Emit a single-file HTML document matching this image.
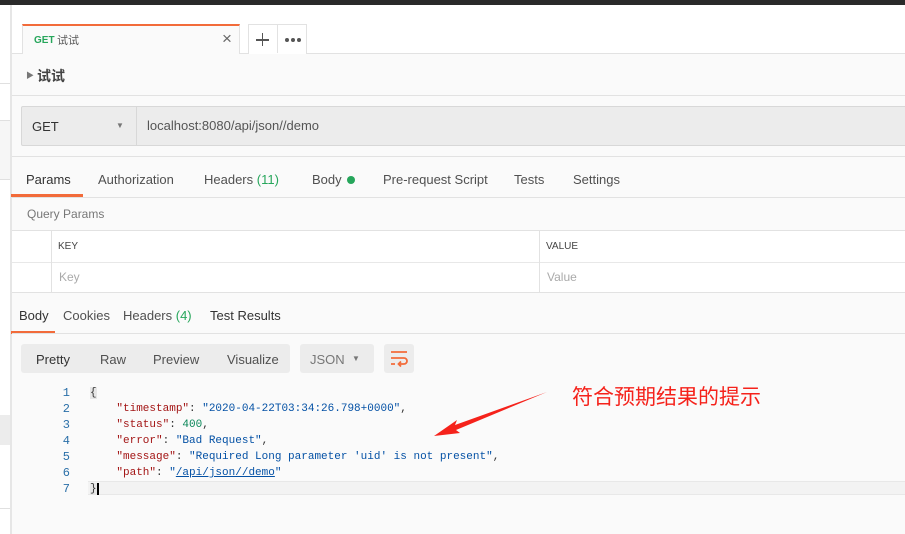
<!DOCTYPE html>
<html><head><meta charset="utf-8"><style>
*{margin:0;padding:0;box-sizing:border-box}
body{width:905px;height:534px;overflow:hidden;background:#fafafa;font-family:"Liberation Sans","Noto Sans CJK SC",sans-serif;font-size:13px;color:#505050;position:relative}
.a{position:absolute}
.t{position:absolute;white-space:nowrap}
.mono{font-family:"Liberation Mono","DejaVu Sans Mono",monospace;font-size:11px}
</style></head><body>
<div class="a" style="left:0;top:0;width:905px;height:5px;background:#2a2a2a"></div>
<div class="a" style="left:0;top:5px;width:10px;height:529px;background:#fff"></div>
<div class="a" style="left:0;top:83px;width:10px;height:1px;background:#e0e0e0"></div>
<div class="a" style="left:0;top:120px;width:10px;height:60px;background:#f6f6f6;border-top:1px solid #e0e0e0;border-bottom:1px solid #e0e0e0"></div>
<div class="a" style="left:0;top:415px;width:10px;height:30px;background:#ececec"></div>
<div class="a" style="left:0;top:508px;width:10px;height:1px;background:#e0e0e0"></div>
<div class="a" style="left:10px;top:5px;width:2px;height:529px;background:#e6e6e6"></div>

<div class="a" style="left:12px;top:5px;width:893px;height:48px;background:#fff"></div>
<div class="a" style="left:12px;top:53px;width:893px;height:1px;background:#e2e2e2"></div>
<div class="a" style="left:22px;top:24px;width:218px;height:30px;background:#fafafa;border-top:2px solid #f26b3a;border-left:1px solid #e2e2e2;border-right:1px solid #e2e2e2"></div>
<div class="t" style="left:34px;top:35px;font-size:10px;font-weight:bold;color:#26a65b;line-height:12px">GET</div>
<div class="t" style="left:57px;top:34px;font-size:11px;color:#555;line-height:14px">试试</div>
<div class="t" style="left:222px;top:29px;font-size:17px;color:#666">×</div>
<div class="a" style="left:248px;top:24px;width:59px;height:30px;border:1px solid #e2e2e2;border-bottom:none;background:#fff"></div>
<div class="a" style="left:277px;top:24px;width:1px;height:29px;background:#e2e2e2"></div>
<div class="a" style="left:256px;top:39px;width:13px;height:1.6px;background:#555"></div>
<div class="a" style="left:261.7px;top:33px;width:1.6px;height:13px;background:#555"></div>
<div class="a" style="left:285px;top:38px;width:4px;height:4px;border-radius:50%;background:#555"></div>
<div class="a" style="left:291px;top:38px;width:4px;height:4px;border-radius:50%;background:#555"></div>
<div class="a" style="left:297px;top:38px;width:4px;height:4px;border-radius:50%;background:#555"></div>

<div class="t" style="left:26px;top:70px;font-size:8px;color:#777">▶</div>
<div class="t" style="left:37px;top:66px;font-size:14px;font-weight:bold;color:#444">试试</div>
<div class="a" style="left:12px;top:95px;width:893px;height:1px;background:#e2e2e2"></div>

<div class="a" style="left:21px;top:106px;width:890px;height:40px;background:#ececec;border:1px solid #d8d8d8;border-radius:2px"></div>
<div class="a" style="left:136px;top:107px;width:1px;height:38px;background:#d8d8d8"></div>
<div class="t" style="left:32px;top:119px;font-size:13px;color:#333">GET</div>
<div class="t" style="left:116px;top:121px;font-size:8px;color:#777">▼</div>
<div class="t" style="left:147px;top:118px;font-size:13px;color:#555">localhost:8080/api/json//demo</div>
<div class="a" style="left:12px;top:156px;width:893px;height:1px;background:#e2e2e2"></div>

<div class="t" style="left:26px;top:172px;color:#333">Params</div>
<div class="a" style="left:11px;top:194px;width:72px;height:3px;background:#f26b3a"></div>
<div class="t" style="left:98px;top:172px">Authorization</div>
<div class="t" style="left:204px;top:172px">Headers <span style="color:#26a65b">(11)</span></div>
<div class="t" style="left:312px;top:172px">Body <span style="display:inline-block;width:8px;height:8px;border-radius:50%;background:#26a65b;margin-left:2px"></span></div>
<div class="t" style="left:383px;top:172px">Pre-request Script</div>
<div class="t" style="left:514px;top:172px">Tests</div>
<div class="t" style="left:573px;top:172px">Settings</div>
<div class="a" style="left:12px;top:197px;width:893px;height:1px;background:#e2e2e2"></div>

<div class="t" style="left:27px;top:207px;font-size:12px;color:#777">Query Params</div>
<div class="a" style="left:12px;top:230px;width:893px;height:63px;background:#fff;border-top:1px solid #e2e2e2;border-bottom:1px solid #e2e2e2"></div>
<div class="a" style="left:12px;top:262px;width:893px;height:1px;background:#e8e8e8"></div>
<div class="a" style="left:51px;top:230px;width:1px;height:63px;background:#e2e2e2"></div>
<div class="a" style="left:539px;top:230px;width:1px;height:63px;background:#e2e2e2"></div>
<div class="t" style="left:58px;top:241px;font-size:10px;color:#444">KEY</div>
<div class="t" style="left:546px;top:241px;font-size:10px;color:#444">VALUE</div>
<div class="t" style="left:59px;top:270px;font-size:12px;color:#aaa">Key</div>
<div class="t" style="left:547px;top:270px;font-size:12px;color:#aaa">Value</div>

<div class="t" style="left:19px;top:308px;color:#333">Body</div>
<div class="t" style="left:63px;top:308px">Cookies</div>
<div class="t" style="left:123px;top:308px">Headers <span style="color:#26a65b">(4)</span></div>
<div class="t" style="left:210px;top:308px;color:#333">Test Results</div>
<div class="a" style="left:11px;top:331px;width:44px;height:3px;background:#f26b3a"></div>
<div class="a" style="left:12px;top:333px;width:893px;height:1px;background:#e2e2e2"></div>

<div class="a" style="left:21px;top:344px;width:269px;height:29px;background:#ececec;border-radius:3px"></div>
<div class="t" style="left:36px;top:352px;color:#333">Pretty</div>
<div class="t" style="left:100px;top:352px">Raw</div>
<div class="t" style="left:153px;top:352px">Preview</div>
<div class="t" style="left:227px;top:352px">Visualize</div>
<div class="a" style="left:300px;top:344px;width:74px;height:29px;background:#ececec;border-radius:3px"></div>
<div class="t" style="left:310px;top:352px;color:#777">JSON</div>
<div class="t" style="left:352px;top:354px;font-size:8px;color:#777">▼</div>
<div class="a" style="left:384px;top:344px;width:30px;height:29px;background:#ececec;border-radius:3px"></div>
<svg class="a" style="left:384px;top:344px" width="30" height="29"><g stroke="#f26b3a" stroke-width="1.8" fill="none"><path d="M7 8h16M7 14h13a3 3 0 0 1 0 6h-5M7 20h4"/><path d="M17 17.5l-2.5 2.5 2.5 2.5"/></g></svg>

<div class="a" style="left:88px;top:481px;width:817px;height:14px;background:#f3f3f3;border-top:1px solid #e8e8e8;border-bottom:1px solid #e8e8e8"></div>
<div class="a mono" style="left:40px;top:385px;width:30px;text-align:right;line-height:16px;color:#2a6fa8;font-size:12px">1<br>2<br>3<br>4<br>5<br>6<br>7</div>
<div class="a mono" style="left:90px;top:385px;line-height:16px;white-space:pre;color:#333"><span style="background:#e6e6e6">{</span>
    <span style="color:#a31515">"timestamp"</span>: <span style="color:#0451a5">"2020-04-22T03:34:26.798+0000"</span>,
    <span style="color:#a31515">"status"</span>: <span style="color:#098658">400</span>,
    <span style="color:#a31515">"error"</span>: <span style="color:#0451a5">"Bad Request"</span>,
    <span style="color:#a31515">"message"</span>: <span style="color:#0451a5">"Required Long parameter 'uid' is not present"</span>,
    <span style="color:#a31515">"path"</span>: <span style="color:#0451a5">"<u>/api/json//demo</u>"</span>
<span style="background:#e6e6e6;border-right:2px solid #000">}</span></div>

<svg class="a" style="left:420px;top:380px" width="140" height="70"><path d="M127 12 L35 45 L37 40 L14 56 L40 53 L36 50 Z" fill="#f5221b"/></svg>
<div class="t" style="left:572px;top:383px;font-size:21px;color:#f5221b;font-family:'Noto Sans CJK SC',sans-serif;line-height:26px">符合预期结果的提示</div>
</body></html>
